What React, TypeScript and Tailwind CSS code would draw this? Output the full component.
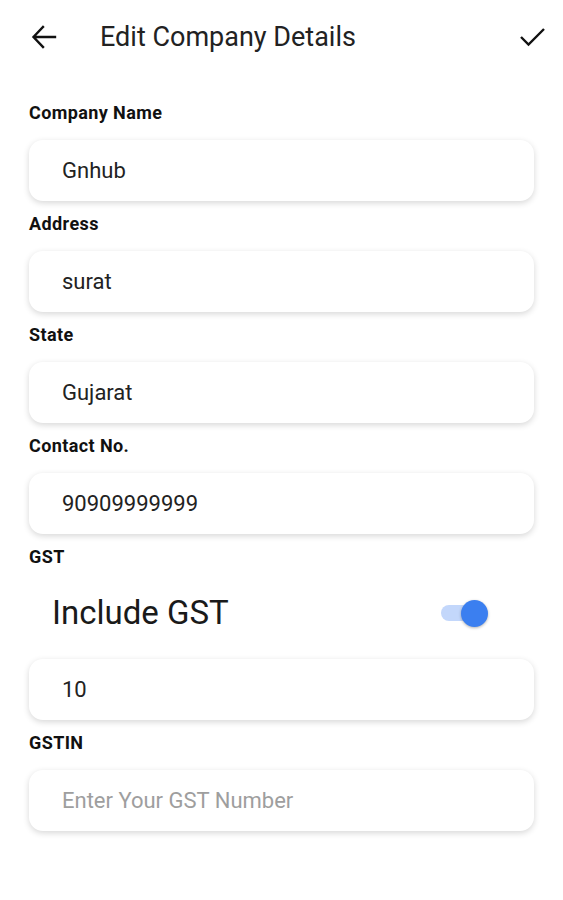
import { useState } from "react";

type Field = {
    label: string;
    value: string;
    placeholder?: string;
};

const fields: Field[] = [
    { label: "Company Name", value: "Gnhub" },
    { label: "Address", value: "surat" },
    { label: "State", value: "Gujarat" },
    { label: "Contact No.", value: "90909999999" },
];

function InputBox({ value, placeholder }: { value: string; placeholder?: string }) {
    return (
        <div className="h-[61px] rounded-[14px] bg-white shadow-[0_2px_6px_rgba(0,0,0,0.16)] flex items-center px-[33px]">
            {value ? (
                <span className="text-[22px] text-[#222]">{value}</span>
            ) : (
                <span className="text-[22px] text-[#9e9e9e]">{placeholder}</span>
            )}
        </div>
    );
}

function Label({ text }: { text: string }) {
    return <div className="text-[18px] leading-[20px] font-bold tracking-[0.4px] text-[#111]">{text}</div>;
}

export default function App() {
    const [gst, setGst] = useState(true);

    return (
        <div className="w-[563px] min-h-[900px] bg-white font-['Roboto',sans-serif]">
            {/* header */}
            <div className="flex items-center h-[74px] px-[31px]">
                <svg width="26" height="24" viewBox="0 0 26 24" className="shrink-0">
                    <path d="M24 12H3M12 2L2.5 12L12 22" fill="none" stroke="#111" strokeWidth="2.4" strokeLinecap="square" />
                </svg>
                <h1 className="ml-[43px] text-[27px] text-[#222]">Edit Company Details</h1>
                <svg width="28" height="22" viewBox="0 0 28 22" className="ml-auto shrink-0 mr-[-15px]">
                    <path d="M2 11L9.5 18.5L25 3" fill="none" stroke="#111" strokeWidth="2.4" />
                </svg>
            </div>

            <div className="px-[29px] pt-[29px]">
                {fields.map((f) => (
                    <div key={f.label} className="mb-[13px]">
                        <Label text={f.label} />
                        <div className="mt-[17px]">
                            <InputBox value={f.value} />
                        </div>
                    </div>
                ))}

                <Label text="GST" />
                <div className="mt-[13px] h-[66px] flex items-center pl-[23px] pr-[45px]">
                    <span className="text-[33px] text-[#1a1a1a]">Include GST</span>
                    <button
                        onClick={() => setGst(!gst)}
                        className="ml-auto relative w-[50px] h-[28px] flex items-center"
                    >
                        <span className={`absolute left-[2px] w-[40px] h-[16px] rounded-full ${gst ? "bg-[#c3d7fb]" : "bg-[#d4d4d4]"}`} />
                        <span
                            className={`absolute w-[27px] h-[27px] rounded-full shadow-[0_1px_3px_rgba(0,0,0,0.3)] ${gst ? "left-[22px] bg-[#3b7ff0]" : "left-0 bg-white"}`}
                        />
                    </button>
                </div>
                <div className="mt-[13px] mb-[13px]">
                    <InputBox value="10" />
                </div>

                <Label text="GSTIN" />
                <div className="mt-[17px]">
                    <InputBox value="" placeholder="Enter Your GST Number" />
                </div>
            </div>
        </div>
    );
}
